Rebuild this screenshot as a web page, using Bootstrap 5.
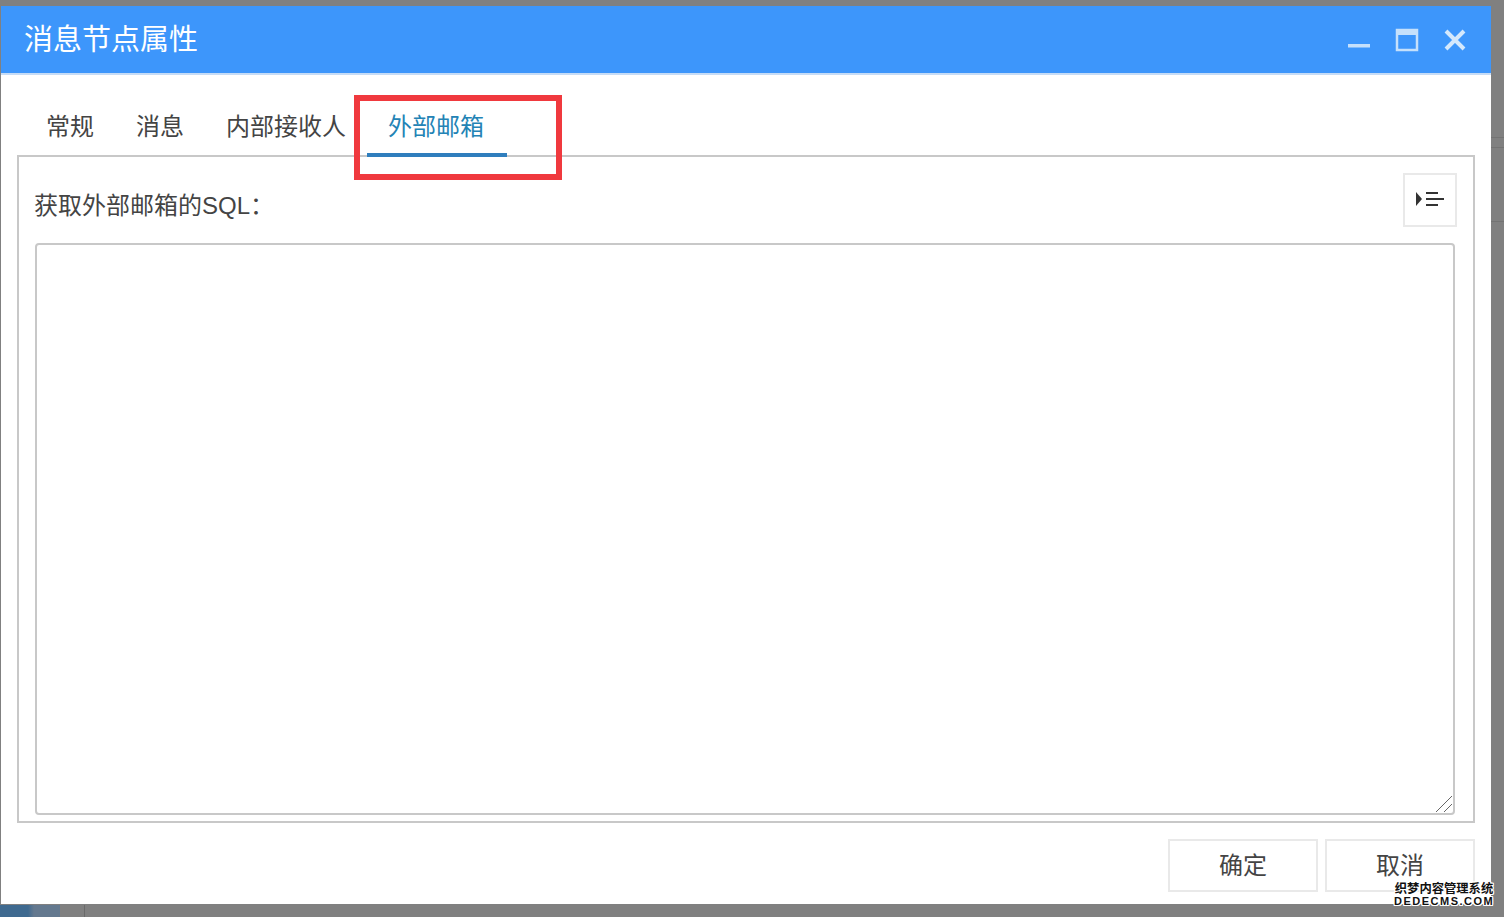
<!DOCTYPE html>
<html lang="zh"><head><meta charset="utf-8"><title>消息节点属性</title>
<link href="https://cdn.jsdelivr.net/npm/bootstrap@5.3.0/dist/css/bootstrap.min.css" rel="stylesheet">
<style>
html,body{height:100%;overflow:hidden}
body{font-family:"Liberation Sans","Noto Sans CJK SC",sans-serif;color:#444;
background:
 linear-gradient(#737373,#737373) 1491px 137px/13px 1px no-repeat,
 linear-gradient(#737373,#737373) 1491px 147px/13px 1px no-repeat,
 linear-gradient(#737373,#737373) 1491px 221px/13px 1px no-repeat,
 linear-gradient(90deg,#3f6a90 0,#3f6a90 28px,#64798f 34px,#64798f 60px) 0 905px/60px 12px no-repeat,
 linear-gradient(#6a6a6a,#6a6a6a) 84px 905px/1px 12px no-repeat,
 #808080}
.dlg{position:relative;margin:6px 0 0 1px;width:1490px;height:898px;background:#fff;display:flex;flex-direction:column}
.dlg-head{height:69px;flex:none;background:#3d96fb;border-bottom:2px solid #c6dcf6;display:flex;align-items:center;justify-content:space-between;padding:0 22px 0 23px}
.dlg-title{font-size:29px;line-height:1;color:#fff;margin-top:2px}
.win-btns{display:flex;gap:20px}
.win-btns svg{display:block;width:28px;height:28px}
.dlg-body{flex:1;display:flex;flex-direction:column;padding:0 16px}
.tabs-row{display:flex;height:82px;padding-left:8px;align-items:flex-end;margin-bottom:-2px;position:relative;z-index:1}
.tab-item{font-size:24px;line-height:1;padding:0 21px 8px;height:49px;display:flex;align-items:center;color:#444;border-bottom:4px solid transparent;white-space:nowrap}
.tab-item.is-on{color:#2383b5;border-bottom-color:#2f7ebd;width:140px}
.tab-pane-box{height:668px;border:2px solid #c8c8c8;padding:16px 18px 6px 16px;display:flex;flex-direction:column}
.sql-top{height:70px;flex:none;display:flex;justify-content:space-between;align-items:flex-start}
.sql-label{font-size:24px;line-height:1;margin:21px 0 0 -1px;color:#444}
.fmt-btn{width:54px;height:54px;border:2px solid #e9e9e9;background:#fff;padding:0 0 2px;margin-right:-2px;display:flex;align-items:center;justify-content:center}
.sql-wrap{flex:1;position:relative;display:flex}
.sql-area{flex:1;border:2px solid #c8c8c8;border-radius:4px;resize:none;display:block;outline:none}
.sql-grip{position:absolute;right:2px;bottom:2px;width:18px;height:18px;pointer-events:none}
.dlg-foot{flex:none;display:flex;justify-content:flex-end;gap:7px;padding-top:16px}
.foot-btn{width:150px;height:53px;border:2px solid #e9e9e9;background:#fff;font-size:24px;line-height:1;color:#444;padding:0}
.red-mark{position:absolute;left:353px;top:89px;width:208px;height:85px;border:6px solid #f0393e;pointer-events:none;z-index:2}
.wm{position:absolute;left:1393px;top:877px;width:100px;color:#111;text-shadow:1px 0 #fff,-1px 0 #fff,0 1px #fff,0 -1px #fff,1px 1px #fff,-1px -1px #fff,1px -1px #fff,-1px 1px #fff;text-align:center;z-index:3;line-height:1;font-weight:700}
.wm-a{font-size:12.3px;white-space:nowrap}
.wm-b{font-size:11px;letter-spacing:1.5px;white-space:nowrap;margin-top:1px}
</style></head><body>
<div class="dlg">
 <div class="dlg-head">
  <div class="dlg-title">消息节点属性</div>
  <div class="win-btns">
   <svg viewBox="0 0 28 28"><rect x="3" y="18" width="22" height="3.5" fill="#c5e0fb"/></svg>
   <svg viewBox="0 0 28 28"><path d="M4 4h20v20H4z" fill="none" stroke="#c5e0fb" stroke-width="2.5"/><rect x="4" y="4" width="20" height="5" fill="#c5e0fb"/></svg>
   <svg viewBox="0 0 28 28"><path d="M5 5L23 23M23 5L5 23" stroke="#d4e8fc" stroke-width="4" fill="none"/></svg>
  </div>
 </div>
 <div class="dlg-body">
  <div class="tabs-row">
   <div class="tab-item">常规</div>
   <div class="tab-item">消息</div>
   <div class="tab-item">内部接收人</div>
   <div class="tab-item is-on">外部邮箱</div>
  </div>
  <div class="tab-pane-box">
   <div class="sql-top">
    <div class="sql-label">获取外部邮箱的SQL：</div>
    <button class="fmt-btn" type="button" aria-label="格式化">
     <svg width="30" height="16" viewBox="0 0 30 16"><path d="M1 1l6 7-6 7z" fill="#333"/><path d="M11 2h12M11 8h18M11 14h12" stroke="#333" stroke-width="2" fill="none"/></svg>
    </button>
   </div>
   <div class="sql-wrap">
    <textarea class="sql-area"></textarea>
    <svg class="sql-grip" viewBox="0 0 18 18"><path d="M1 17L17 1M9 17L17 9" stroke="#666" stroke-width="1" fill="none"/></svg>
   </div>
  </div>
  <div class="dlg-foot">
   <button class="foot-btn" type="button">确定</button>
   <button class="foot-btn" type="button">取消</button>
  </div>
 </div>
 <div class="red-mark"></div>
 <div class="wm"><div class="wm-a">织梦内容管理系统</div><div class="wm-b">DEDECMS.COM</div></div>
</div>
<script src="https://cdn.jsdelivr.net/npm/bootstrap@5.3.0/dist/js/bootstrap.bundle.min.js"></script>
</body></html>
